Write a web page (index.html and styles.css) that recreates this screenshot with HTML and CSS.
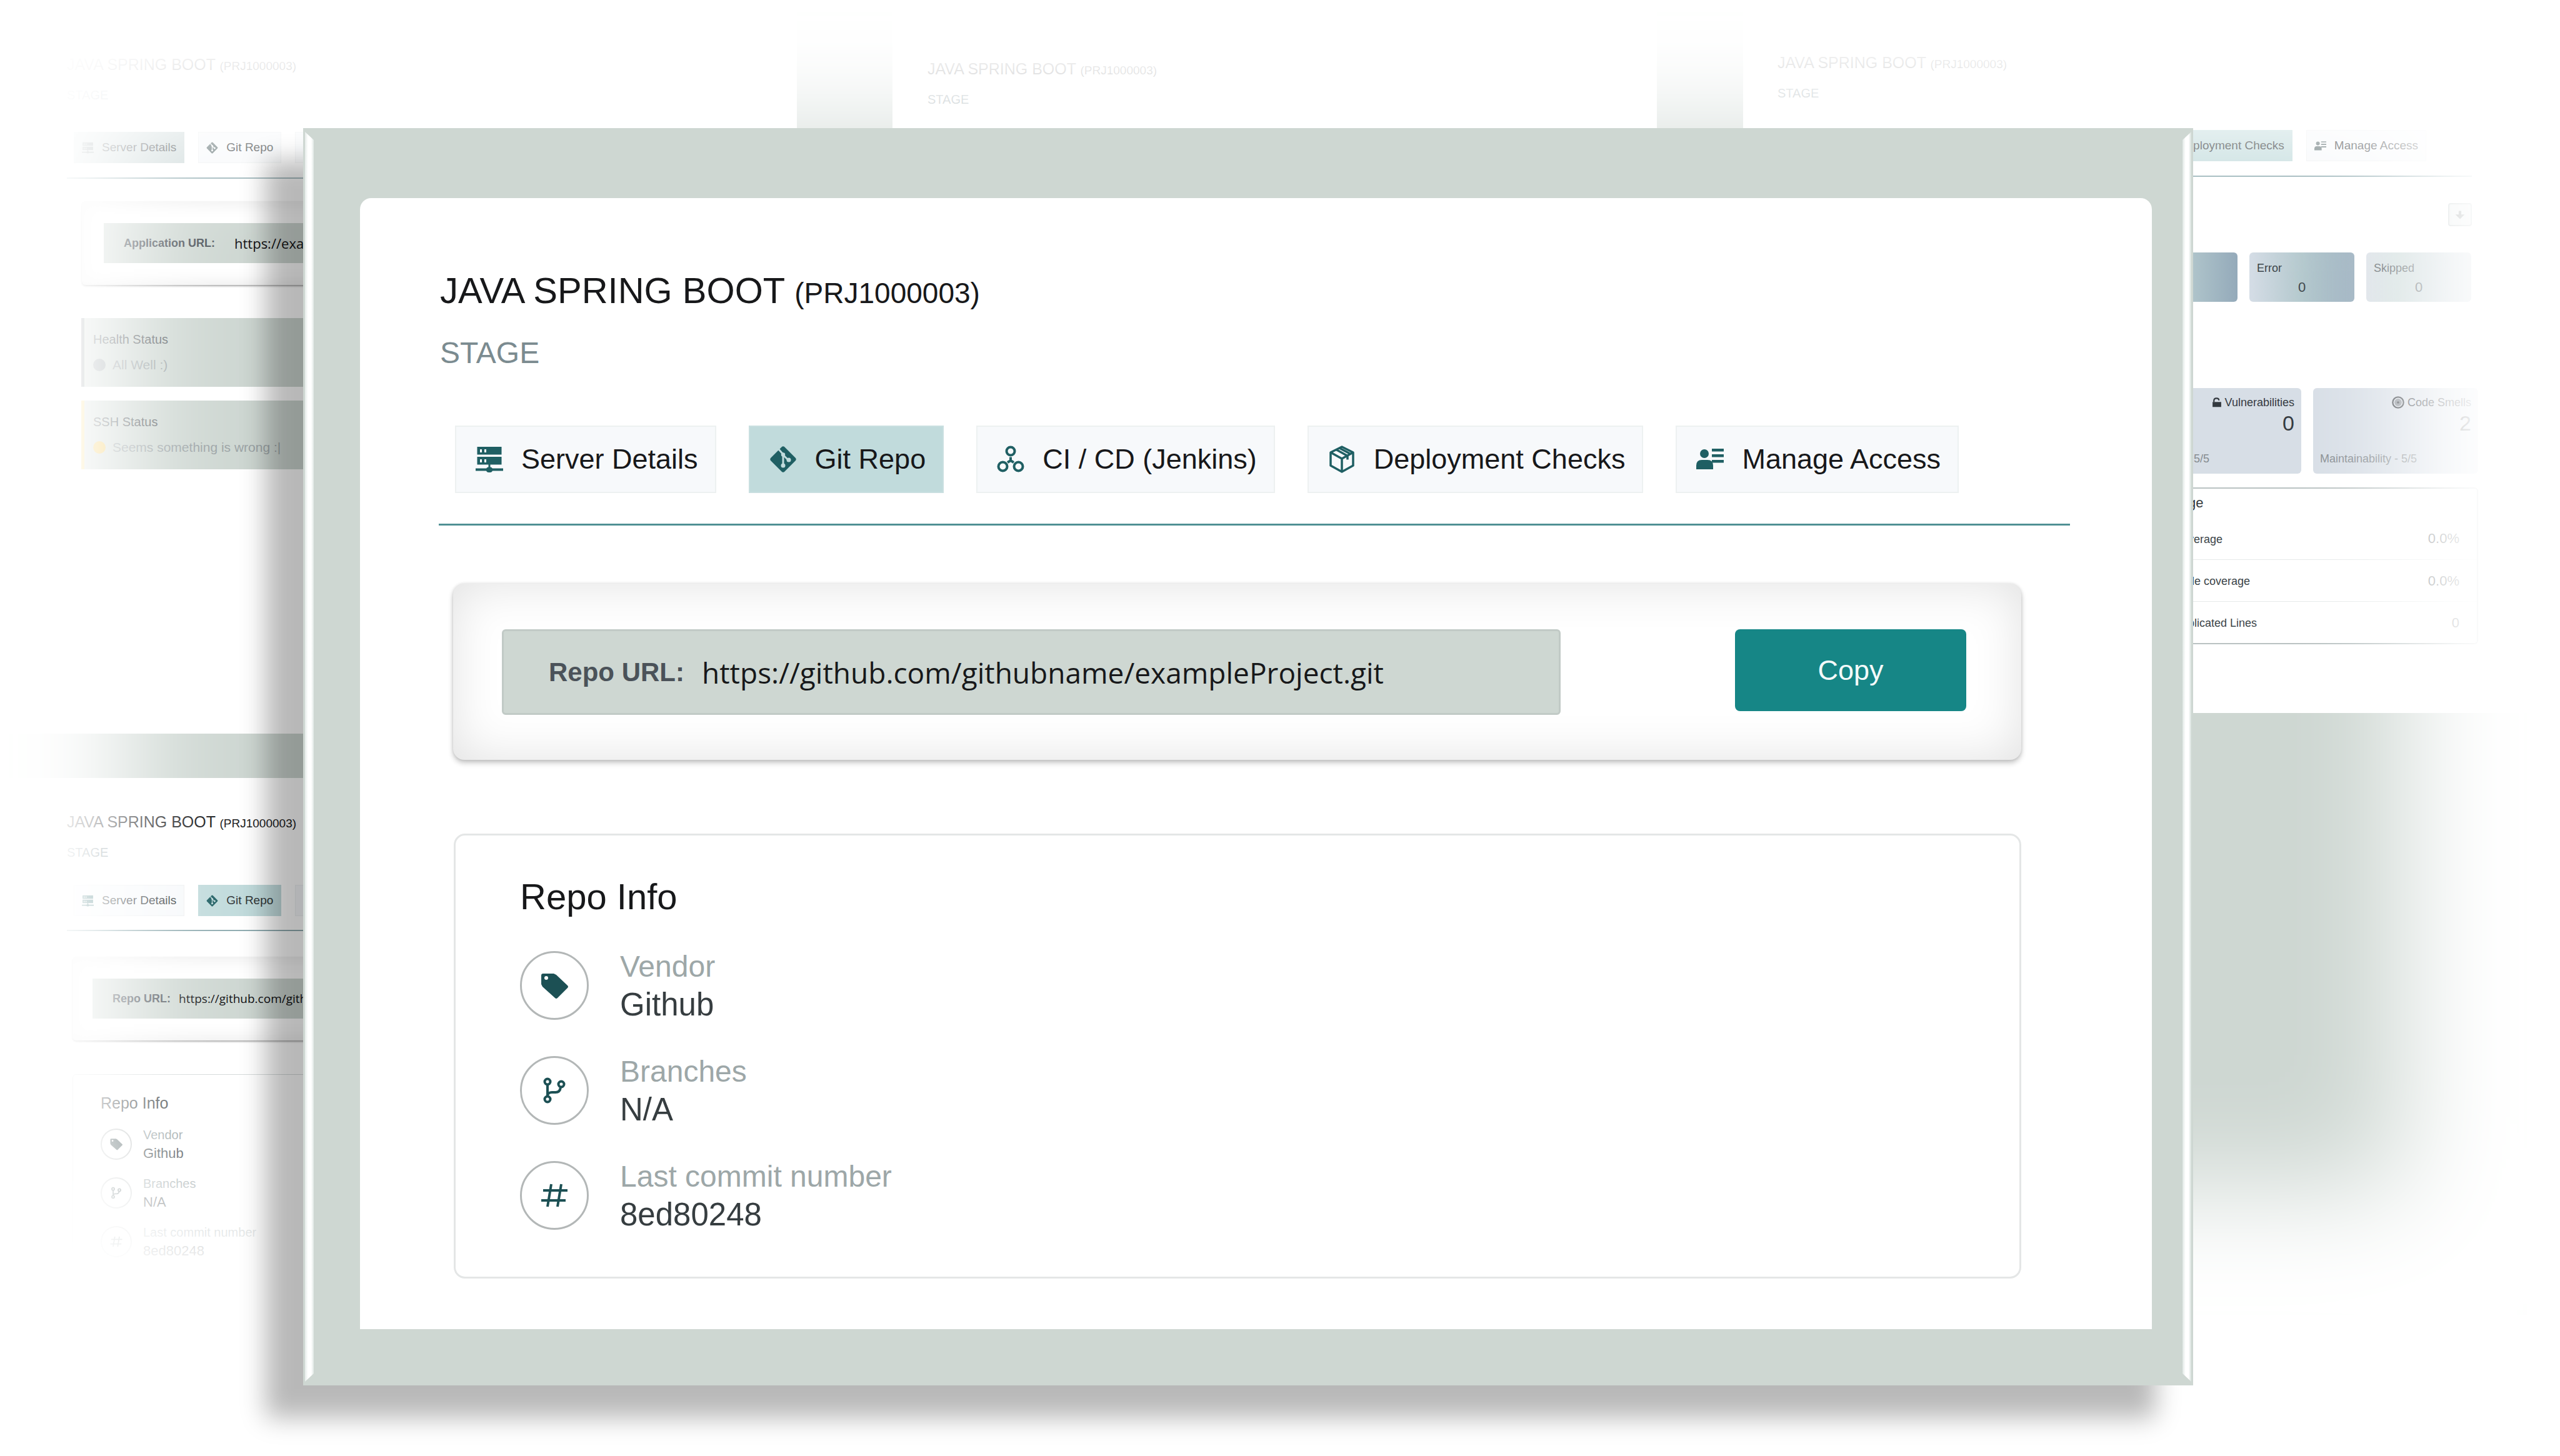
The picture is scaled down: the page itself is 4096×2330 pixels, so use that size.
FILE: index.html
```html
<!DOCTYPE html>
<html lang="en">
<head>
<meta charset="utf-8">
<title>Java Spring Boot – Git Repo</title>
<link rel="stylesheet" href="styles.css">
</head>
<body>
<svg class="sprite" aria-hidden="true">
  <symbol id="i-server" viewBox="0 0 44 44">
    <rect x="2.500" y="2" width="39" height="12.500" fill="currentColor"/>
    <rect x="2.500" y="18" width="39" height="12.500" fill="currentColor"/>
    <path d="M20.500 30h3v6h-3zM0 36.500h44v4H0z" fill="currentColor"/>
    <rect x="17" y="34.500" width="10" height="8.500" rx="4" fill="currentColor"/>
    <path d="M7 6h3v5H7zM14 6h3v5h-3zM7 22h3v5H7zM14 22h3v5h-3z" class="cut-fill"/>
  </symbol>
  <symbol id="i-git" viewBox="0 0 44 44">
    <path d="M19.500 2.500q2.500-2.500 5 0l17 17q2.500 2.500 0 5l-17 17q-2.500 2.500-5 0l-17-17q-2.500-2.500 0-5z" fill="currentColor"/>
    <path d="M15 6l7 8v18M22 15l8 8" fill="none" class="cut-line" stroke-width="3"/>
    <circle cx="22" cy="32" r="3.500" class="cut-fill"/>
    <circle cx="31" cy="23" r="3.500" class="cut-fill"/>
    <circle cx="22" cy="14.500" r="3.200" class="cut-fill"/>
  </symbol>
  <symbol id="i-nodes" viewBox="0 0 44 44">
    <g fill="none" stroke="currentColor" stroke-width="4">
      <circle cx="22" cy="9" r="6.500"/>
      <circle cx="9.500" cy="33.500" r="7"/>
      <circle cx="34.500" cy="33.500" r="7"/>
      <path d="M22 18.500v5.500l-5 3M22 24l5 3"/>
    </g>
  </symbol>
  <symbol id="i-box" viewBox="0 0 44 44">
    <g fill="none" stroke="currentColor" stroke-width="3.500" stroke-linejoin="round">
      <path d="M22 2l18 9v21L22 42 4 32V11z"/>
      <path d="M4 11l18 10 18-10M22 21v21M13 6.500l18 10v6M18 4l17 9"/>
    </g>
  </symbol>
  <symbol id="i-user" viewBox="0 0 44 44">
    <circle cx="13" cy="13" r="7" fill="currentColor"/>
    <path d="M0 38v-6q0-9 9-9h9q9 0 9 9v6z" fill="currentColor"/>
    <path d="M25 5h19v4.500H25zM25 14h19v4.500H25zM25 23h19v4.500H25z" fill="currentColor"/>
  </symbol>
  <symbol id="i-tag" viewBox="0 0 44 44">
    <path d="M4 3h17l4 2 18 17q2 2 0 4L27 42q-2 2-4 0L3 24l-2-4V6q0-3 3-3z" fill="currentColor"/>
    <circle cx="9" cy="10" r="3" class="cut-fill"/>
  </symbol>
  <symbol id="i-branch" viewBox="0 0 44 44">
    <g fill="none" stroke="currentColor" stroke-width="4">
      <circle cx="11" cy="8" r="4.500"/>
      <circle cx="11" cy="36" r="4.500"/>
      <circle cx="33" cy="12" r="4.500"/>
      <path d="M11 12.500v19M11 30q1-5 7-5h6q7 0 8-8"/>
    </g>
  </symbol>
  <symbol id="i-hash" viewBox="0 0 44 44">
    <path d="M17 4l-6 36M33 4l-6 36M4 14h39M1 30h39" fill="none" stroke="currentColor" stroke-width="4"/>
  </symbol>
  <symbol id="i-lock" viewBox="0 0 44 44">
    <path d="M3 20h38v22H3z" fill="currentColor"/>
    <path d="M9 20v-6q0-10 11-10t11 9" fill="none" stroke="currentColor" stroke-width="6"/>
  </symbol>
  <symbol id="i-smell" viewBox="0 0 44 44">
    <circle cx="22" cy="22" r="19" fill="none" stroke="currentColor" stroke-width="5"/>
    <circle cx="22" cy="22" r="13" fill="currentColor" opacity=".5"/>
    <circle cx="22" cy="22" r="4" fill="currentColor"/>
  </symbol>
  <symbol id="i-down" viewBox="0 0 44 44">
    <path d="M17 6h10v14h13L22 38 4 20h13z" fill="currentColor"/>
  </symbol>
</svg>

<div class="backdrop" aria-hidden="true" inert>
  <div class="column column-left">
    <section class="screen screen-details">
      <p class="mini-title">JAVA SPRING BOOT <small>(PRJ1000003)</small></p>
      <p class="mini-stage">STAGE</p>
      <div class="mini-tabs">
        <button class="mini-tab active"><svg><use href="#i-server"/></svg>Server Details</button>
        <button class="mini-tab"><svg><use href="#i-git"/></svg>Git Repo</button>
        <button class="mini-tab"><svg><use href="#i-nodes"/></svg>CI / CD (Jenkins)</button>
      </div>
      <div class="mini-panel inset">
        <div class="mini-field"><b>Application URL:</b><span class="mini-url large">https://example.com</span></div>
      </div>
      <div class="status ok">
        <p class="status-name">Health Status</p>
        <p class="status-text"><i class="dot"></i>All Well :)</p>
      </div>
      <div class="status warn">
        <p class="status-name">SSH Status</p>
        <p class="status-text"><i class="dot"></i>Seems something is wrong :|</p>
      </div>
    </section>
    <section class="screen screen-repo">
      <p class="mini-title">JAVA SPRING BOOT <small>(PRJ1000003)</small></p>
      <p class="mini-stage">STAGE</p>
      <div class="mini-tabs">
        <button class="mini-tab"><svg><use href="#i-server"/></svg>Server Details</button>
        <button class="mini-tab active"><svg><use href="#i-git"/></svg>Git Repo</button>
        <button class="mini-tab"><svg><use href="#i-nodes"/></svg>CI / CD (Jenkins)</button>
      </div>
      <div class="mini-panel">
        <div class="mini-field close"><b>Repo URL:</b><span class="mini-url">https://github.com/githubname/exampleProject.git</span></div>
      </div>
      <div class="mini-info">
        <p class="mini-heading">Repo Info</p>
        <div class="mini-row"><span class="mini-circle"><svg><use href="#i-tag"/></svg></span><p>Vendor<strong>Github</strong></p></div>
        <div class="mini-row"><span class="mini-circle"><svg><use href="#i-branch"/></svg></span><p>Branches<strong>N/A</strong></p></div>
        <div class="mini-row"><span class="mini-circle"><svg><use href="#i-hash"/></svg></span><p>Last commit number<strong>8ed80248</strong></p></div>
      </div>
    </section>
  </div>
  <div class="column column-middle">
    <section class="screen screen-pipeline">
      <p class="mini-title">JAVA SPRING BOOT <small>(PRJ1000003)</small></p>
      <p class="mini-stage">STAGE</p>
    </section>
  </div>
  <div class="column column-right">
    <section class="screen screen-checks">
      <p class="mini-title">JAVA SPRING BOOT <small>(PRJ1000003)</small></p>
      <p class="mini-stage">STAGE</p>
      <div class="mini-tabs end">
        <button class="mini-tab active"><svg><use href="#i-box"/></svg>Deployment Checks</button>
        <button class="mini-tab"><svg><use href="#i-user"/></svg>Manage Access</button>
      </div>
      <div class="tools"><button class="download"><svg><use href="#i-down"/></svg></button></div>
      <div class="counts">
        <div class="count"></div>
        <div class="count">Error<span>0</span></div>
        <div class="count">Skipped<span>0</span></div>
      </div>
      <div class="quality">
        <div class="metric">
          <p class="metric-name"><svg><use href="#i-lock"/></svg>Vulnerabilities</p>
          <p class="metric-value">0</p>
          <p class="metric-note">Security - 5/5</p>
        </div>
        <div class="metric">
          <p class="metric-name"><svg class="wide"><use href="#i-smell"/></svg>Code Smells</p>
          <p class="metric-value">2</p>
          <p class="metric-note">Maintainability - 5/5</p>
        </div>
      </div>
      <div class="coverage">
        <p class="coverage-title">Coverage</p>
        <table>
          <tr><th>Coverage</th><td>0.0%</td></tr>
          <tr><th>Code coverage</th><td>0.0%</td></tr>
          <tr><th>Duplicated Lines</th><td>0</td></tr>
        </table>
      </div>
    </section>
  </div>
</div>

<main class="frame">
  <div class="card">
    <h1 class="title">JAVA SPRING BOOT <small>(PRJ1000003)</small></h1>
    <p class="stage">STAGE</p>
    <nav class="tabs">
      <button class="tab"><svg><use href="#i-server"/></svg>Server Details</button>
      <button class="tab active"><svg><use href="#i-git"/></svg>Git Repo</button>
      <button class="tab"><svg><use href="#i-nodes"/></svg>CI / CD (Jenkins)</button>
      <button class="tab"><svg><use href="#i-box"/></svg>Deployment Checks</button>
      <button class="tab"><svg><use href="#i-user"/></svg>Manage Access</button>
    </nav>
    <section class="repo-panel">
      <div class="field">
        <label for="repo-url">Repo URL:</label>
        <input id="repo-url" type="text" readonly value="https://github.com/githubname/exampleProject.git">
      </div>
      <button class="copy">Copy</button>
    </section>
    <section class="info">
      <h2>Repo Info</h2>
      <dl>
        <div class="row">
          <span class="circle"><svg><use href="#i-tag"/></svg></span>
          <div><dt>Vendor</dt><dd>Github</dd></div>
        </div>
        <div class="row">
          <span class="circle"><svg><use href="#i-branch"/></svg></span>
          <div><dt>Branches</dt><dd>N/A</dd></div>
        </div>
        <div class="row">
          <span class="circle"><svg><use href="#i-hash"/></svg></span>
          <div><dt>Last commit number</dt><dd>8ed80248</dd></div>
        </div>
      </dl>
    </section>
  </div>
</main>
</body>
</html>
```
FILE: styles.css
```css
:root {
  --sage: #ced7d2;
  --teal: #168686;
  --ink: #1f5f63;
  --cut: #f7f9fb;
}

* { box-sizing: border-box; }

body {
  position: relative;
  margin: 0;
  min-height: 100vh;
  display: flow-root;
  background: #fff;
  color: #17181a;
  font-family: "Liberation Sans", Arial, sans-serif;
}

p, h1, h2, dl, dd { margin: 0; font-weight: 400; }
button { font: inherit; color: inherit; margin: 0; }
.sprite { display: none; }
.cut-fill { fill: var(--cut); }
.cut-line { stroke: var(--cut); }

/* Faded screens behind the main card */
.backdrop {
  position: absolute;
  inset: 20px 52px 226px 15px;
  overflow: hidden;
  display: flex;
  background: var(--sage);
}
.backdrop::after {
  content: "";
  position: absolute;
  inset: 0;
  box-shadow: inset 0 0 180px 200px #fff;
}
.column { display: flex; flex-direction: column; }
.column-left { flex: 0 0 1260px; gap: 71px; }
.column-middle { flex: 0 0 1223px; margin: 0 138px 0 153px; }
.column-right { flex: 1; }
.screen { background: #fff; }
.screen-details { height: 1154px; padding: 68px 40px 0 92px; --ink: #5d6e70; }
.screen-repo { flex: 1; padding: 55px 40px 0 92px; }
.screen-pipeline { flex: 1; padding: 75px 56px; }
.screen-checks { height: 1121px; padding: 65px 79px 0 55px; --ink: #5d6e70; }

.mini-title { font-size: 25px; line-height: 30px; }
.mini-title small { font-size: 19px; }
.mini-stage { margin-top: 19px; font-size: 20px; line-height: 24px; color: #7b8b90; }
.mini-tabs {
  display: flex;
  gap: 22px;
  margin-top: 47px;
  padding: 0 11px 23px;
  border-bottom: 2px solid #8fabb0;
}
.screen-repo .mini-tabs { margin-top: 40px; padding-bottom: 22px; }
.mini-tabs.end { justify-content: flex-end; margin-right: 10px; padding-right: 73px; }
.mini-tab {
  display: flex;
  align-items: center;
  gap: 13px;
  height: 50px;
  padding: 0 12px;
  border: 1px solid #eef0f1;
  background: #f7f9fb;
  color: #2f3436;
  font-size: 19px;
  white-space: nowrap;
}
.mini-tab svg { width: 19px; height: 19px; color: var(--ink); }
.mini-tab.active { background: #c1dbdc; border-color: #c1dbdc; --cut: #c1dbdc; }
.screen-details .mini-tab.active { background: #c9d6d6; border-color: #c9d6d6; --cut: #c9d6d6; }
.mini-panel {
  margin: 41px 79px 0 9px;
  padding: 35px 32px;
  border-radius: 6px;
  box-shadow: inset 0 0 30px rgba(0, 0, 0, .1), 0 2px 3px rgba(0, 0, 0, .35);
}
.mini-panel.inset { margin: 36px 79px 0 24px; padding-left: 35px; }
.mini-field {
  display: flex;
  align-items: center;
  gap: 31px;
  height: 64px;
  padding: 0 32px;
  background: var(--sage);
  font-size: 18px;
  color: #4b5259;
  white-space: nowrap;
  overflow: hidden;
}
.mini-field.close { gap: 13px; }
.mini-url { font-family: "Open Sans", "Noto Sans", sans-serif; font-size: 19px; color: #0d0d10; }
.mini-url.large { font-size: 22px; }

.status {
  height: 110px;
  margin: 53px 79px 0 23px;
  padding: 22px 0 0 14px;
  border-left: 5px solid #8d9499;
  background: var(--sage);
}
.status.warn { margin-top: 22px; border-left-color: #f7d675; }
.status-name { font-size: 20px; line-height: 24px; color: #5c6366; }
.status-text {
  display: flex;
  align-items: center;
  gap: 11px;
  margin-top: 17px;
  font-size: 21px;
  line-height: 24px;
  color: #9ba3a5;
}
.dot { width: 20px; height: 20px; border-radius: 50%; background: #9fa7aa; }
.warn .dot { background: #f2c95c; }

.mini-info { margin: 54px 79px 0 9px; padding: 30px 44px; border: 1px solid #d4d9d9; border-radius: 6px; }
.mini-heading { margin-bottom: 26px; font-size: 25px; line-height: 30px; color: #3a3f42; }
.mini-row { display: flex; align-items: center; gap: 18px; height: 50px; margin-bottom: 28px; font-size: 20px; line-height: 29px; color: #8b9799; }
.mini-row strong { display: block; font-size: 22px; font-weight: 400; color: #2a3235; }
.mini-circle { display: grid; place-items: center; width: 50px; height: 50px; border: 2px solid #b9bdbd; border-radius: 50%; --cut: #fff; }
.mini-circle svg { width: 20px; height: 20px; color: #2f4446; }

.tools { display: flex; justify-content: flex-end; margin: 42px 10px 0; }
.download { display: grid; place-items: center; width: 38px; height: 37px; padding: 0; border: 2px solid #a3afaf; border-radius: 4px; background: #dde3e3; }
.download svg { width: 18px; height: 18px; color: #4a5353; }
.counts { display: flex; justify-content: flex-end; gap: 19px; margin: 42px 11px 0; }
.count {
  width: 168px;
  height: 79px;
  padding: 14px 12px 0;
  border-radius: 6px;
  background: linear-gradient(90deg, #d5dde6, #b3c8cd 50%, #94aaba);
  font-size: 18px;
  line-height: 22px;
  color: #3b4448;
}
.count:last-child { background: linear-gradient(90deg, #d9dfe6, #cbdad9 30%, #bcc8d2); color: #4f585c; }
.count span { display: block; margin-top: 9px; font-size: 22px; text-align: center; }
.quality { display: flex; justify-content: flex-end; gap: 19px; margin-top: 138px; }
.metric { width: 264px; height: 137px; padding: 12px 11px 0; border-radius: 6px; background: #d7dee6; color: #33393f; }
.metric-name { display: flex; justify-content: flex-end; align-items: center; gap: 5px; font-size: 18px; line-height: 22px; }
.metric-name svg { width: 16px; height: 18px; }
.metric-name svg.wide { width: 20px; height: 20px; }
.metric-value { font-size: 34px; line-height: 40px; text-align: right; margin-top: 2px; }
.metric-note { margin-top: 26px; font-size: 18px; line-height: 22px; color: #868c90; }
.coverage { width: 555px; margin: 22px 0 0 auto; border: 2px solid #b9c2c2; border-radius: 6px; }
.coverage-title { padding: 10px 18px; font-size: 22px; line-height: 26px; color: #34393c; }
.coverage table { width: 100%; border-collapse: collapse; }
.coverage tr + tr { border-top: 1px solid #e6eaea; }
.coverage th { height: 67px; padding: 4px 0 0 66px; font-size: 18px; font-weight: 400; text-align: left; color: #3b4448; }
.coverage td { padding: 2px 28px 0 0; font-size: 22px; text-align: right; color: #5a6164; }

/* Main framed card */
.frame {
  position: relative;
  margin: 205px 587px 113px 485px;
  padding: 112px 66px 90px 91px;
  background: var(--sage);
  box-shadow: -60px 52px 38px rgba(0, 0, 0, .28);
}
.frame::before,
.frame::after {
  content: "";
  position: absolute;
  top: 6px;
  bottom: 6px;
  width: 14px;
}
.frame::before {
  left: 3px;
  background: linear-gradient(90deg, #e6ecea, #fff 35%, #fff 70%, #e0e8e5);
  clip-path: polygon(0 0, 100% 13px, 100% calc(100% - 13px), 0 100%);
}
.frame::after {
  right: 3px;
  background: linear-gradient(90deg, #e0e8e5, #fff 35%, #fff 70%, #d6e0dc);
  clip-path: polygon(100% 0, 0 13px, 0 calc(100% - 13px), 100% 100%);
}
.card {
  padding: 115px 131px 81px 126px;
  border-radius: 18px 18px 0 0;
  background: #fff;
}
.title { padding-left: 2px; font-size: 58px; line-height: 66px; }
.title small { font-size: 46px; }
.stage { margin-top: 35px; padding-left: 2px; font-size: 48px; line-height: 56px; color: #7b8b90; }

.tabs {
  display: flex;
  gap: 52px;
  margin-top: 88px;
  padding: 0 0 49px 26px;
  border-bottom: 3px solid #4f9094;
}
.tab {
  display: flex;
  align-items: center;
  gap: 29px;
  height: 108px;
  padding: 0 27px 0 31px;
  border: 2px solid #edf1f1;
  background: #f7f9fb;
  font-size: 45px;
  white-space: nowrap;
}
.tab svg { width: 44px; height: 44px; color: var(--ink); }
.tab.active { background: #c1dbdc; border-color: #c9dfe0; --cut: #c1dbdc; }

.repo-panel {
  display: flex;
  justify-content: space-between;
  align-items: flex-start;
  margin: 93px 78px 0 23px;
  padding: 73px 88px 72px 78px;
  border-radius: 18px;
  box-shadow: inset 0 0 80px rgba(0, 0, 0, .12), 0 0 5px rgba(0, 0, 0, .12), 0 5px 8px rgba(0, 0, 0, .22);
}
.field {
  display: flex;
  align-items: center;
  gap: 28px;
  flex: 0 0 1694px;
  height: 137px;
  padding: 0 72px;
  border: 3px solid #c1cac6;
  border-radius: 6px;
  background: var(--sage);
}
.field label { font-size: 42px; font-weight: 700; color: #4b5259; white-space: nowrap; }
.field input {
  flex: 1;
  min-width: 0;
  padding: 0;
  border: 0;
  outline: 0;
  background: transparent;
  font-family: "Open Sans", "Noto Sans", sans-serif;
  font-size: 46px;
  color: #17181a;
}
.copy {
  width: 370px;
  height: 131px;
  border: 0;
  border-radius: 8px;
  background: var(--teal);
  color: #f4fafa;
  font-size: 45px;
}

.info {
  margin: 118px 78px 0 24px;
  padding: 65px 103px 75px;
  border: 3px solid #e4e6e6;
  border-radius: 18px;
}
.info h2 { font-size: 58px; line-height: 66px; }
.info dl { display: flex; flex-direction: column; gap: 58px; margin-top: 54px; }
.row { display: flex; align-items: center; gap: 50px; height: 110px; }
.circle {
  display: grid;
  place-items: center;
  width: 110px;
  height: 110px;
  border: 3px solid #b3b7b7;
  border-radius: 50%;
  color: #1c5054;
  --cut: #fff;
}
.circle svg { width: 44px; height: 44px; }
.row dt { font-size: 48px; line-height: 61px; color: #9da7a8; }
.row dd { font-size: 51px; line-height: 61px; color: #363d40; }
```
